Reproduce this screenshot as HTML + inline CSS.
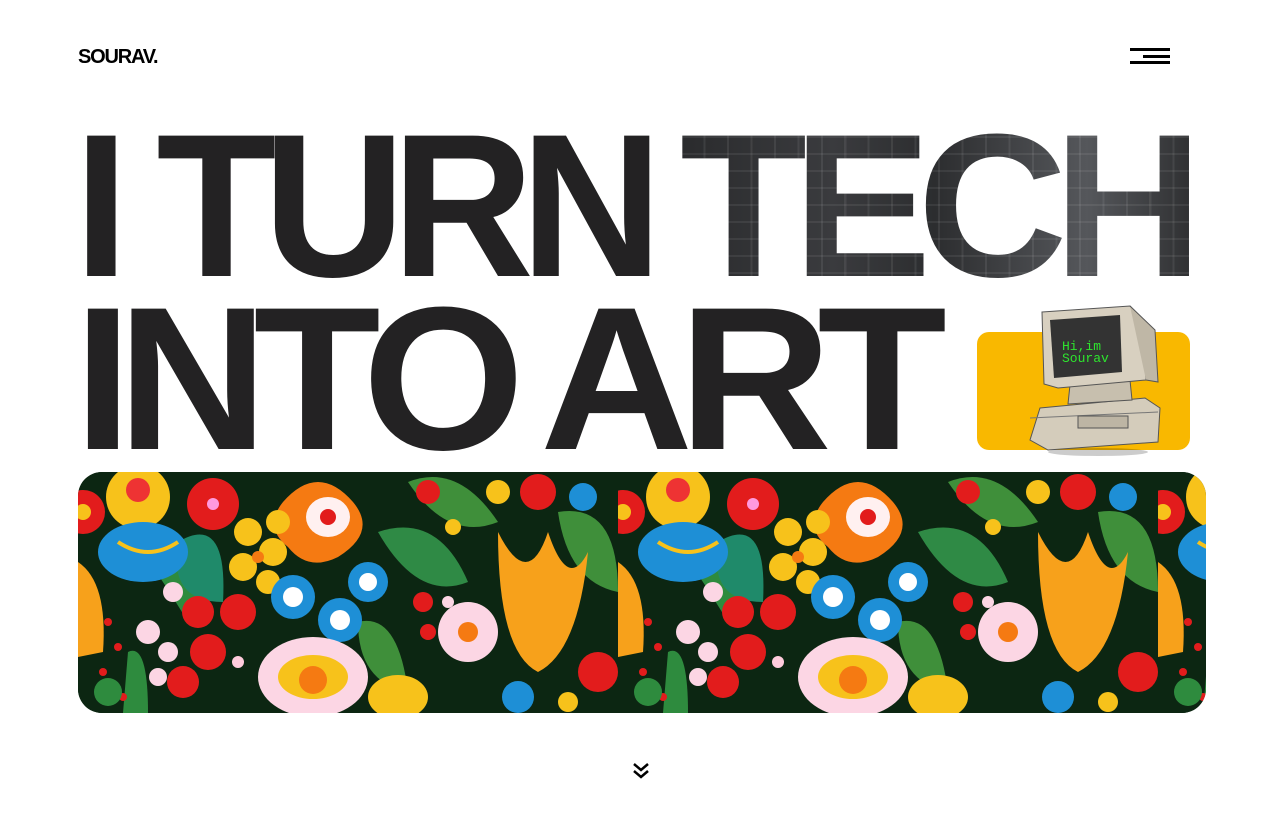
<!DOCTYPE html>
<html><head><meta charset="utf-8"><style>
html,body{margin:0;padding:0;background:#fff;width:1280px;height:832px;overflow:hidden;position:relative;font-family:"Liberation Sans",Arial,sans-serif}
.logo{position:absolute;left:78px;top:45px;font-weight:700;font-size:20px;letter-spacing:-1.2px;color:#000;line-height:24px}
.hb{position:absolute;height:3px;background:#000}
.w{position:absolute;font-weight:700;font-size:204px;letter-spacing:-14px;line-height:1;color:#232223;white-space:pre;transform-origin:left top}
.tech{background:
 repeating-linear-gradient(90deg,rgba(255,255,255,.08) 0 2px,transparent 2px 23px),
 repeating-linear-gradient(0deg,rgba(255,255,255,.07) 0 2px,transparent 2px 17px),
 linear-gradient(90deg,#2a2b2d,#3a3b3e 30%,#2c2d2f 50%,#55575b 80%,#303133);
 -webkit-background-clip:text;background-clip:text;color:transparent}
.card{position:absolute;left:977px;top:332px;width:213px;height:118px;border-radius:12px;background:#f9b800}
.banner{position:absolute;left:78px;top:472px;width:1128px;height:241px;border-radius:24px;overflow:hidden;background:#0c2612}
</style></head><body>
<div class="logo">SOURAV.</div>
<div class="hb" style="left:1130px;top:48px;width:40px"></div>
<div class="hb" style="left:1143px;top:55px;width:27px"></div>
<div class="hb" style="left:1130px;top:61px;width:40px"></div>

<div class="w" style="left:74px;top:104px;transform:scaleX(0.965)">I TURN</div>
<div class="w tech" style="left:680px;top:104px;transform:scaleX(1.02)">TECH</div>
<div class="w" style="left:74px;top:277px;transform:scaleX(1.02)">INTO</div>
<div class="w" style="left:540px;top:277px;transform:scaleX(1.04)">ART</div>

<div class="card"></div>
<svg style="position:absolute;left:1020px;top:300px" width="150" height="160" viewBox="0 0 150 160">
 <ellipse cx="78" cy="152" rx="50" ry="4" fill="#0003"/>
 <path d="M20 108 L125 98 L140 108 L138 142 L28 150 L10 140 Z" fill="#d4ccbb" stroke="#555" stroke-width="1"/>
 <path d="M10 118 L138 112" stroke="#777"/>
 <rect x="58" y="116" width="50" height="12" fill="#bdb5a4" stroke="#555"/>
 <path d="M50 85 L110 80 L112 100 L48 104 Z" fill="#c7bfae" stroke="#555"/>
 <path d="M22 12 L110 6 L122 18 L126 80 L38 88 L24 84 Z" fill="#d8d0c0" stroke="#555"/>
 <path d="M110 6 L135 30 L138 82 L126 80" fill="#bfb7a6" stroke="#555"/>
 <path d="M30 20 L100 15 L102 72 L34 78 Z" fill="#333"/>
 <text x="42" y="50" font-family="Liberation Mono,monospace" font-size="13" fill="#2ee52e">Hi,im</text>
 <text x="42" y="62" font-family="Liberation Mono,monospace" font-size="13" fill="#2ee52e">Sourav</text>
</svg>

<div class="banner">
<svg width="1128" height="241" viewBox="0 0 1128 241">
<defs><pattern id="p" width="540" height="241" patternUnits="userSpaceOnUse">
 <rect width="540" height="241" fill="#0c2612"/>
 <path d="M60 40 Q90 80 130 140 L110 150 Q80 100 50 60Z" fill="#2e8b3e"/>
 <path d="M100 70 Q150 40 145 130 Q90 130 100 70Z" fill="#1f8a6a"/>
 <path d="M300 60 Q360 40 390 110 Q340 130 300 60Z" fill="#2f8a45"/>
 <path d="M330 10 Q380 -10 420 50 Q370 70 330 10Z" fill="#3f8f3a"/>
 <path d="M480 40 Q540 30 540 120 Q490 110 480 40Z" fill="#3f8f3a"/>
 <path d="M280 150 Q320 140 330 220 Q280 210 280 150Z" fill="#3f8f3a"/>
 <path d="M50 180 Q70 170 70 241 L45 241Z" fill="#2e8b3e"/>
 <circle cx="60" cy="25" r="32" fill="#f7c21b"/><circle cx="60" cy="18" r="12" fill="#e33"/>
 <circle cx="135" cy="32" r="26" fill="#e21c1c"/><circle cx="135" cy="32" r="6" fill="#f9d"/>
 <ellipse cx="65" cy="80" rx="45" ry="30" fill="#1e8fd6"/><path d="M40 70 Q70 90 100 70" stroke="#f7c21b" stroke-width="4" fill="none"/>
 <path d="M205 30 Q240 -10 275 30 Q300 60 260 85 Q230 100 210 75 Q185 55 205 30Z" fill="#f57a12"/><ellipse cx="250" cy="45" rx="22" ry="20" fill="#fff0f0"/><circle cx="250" cy="45" r="8" fill="#e21c1c"/>
 <circle cx="170" cy="60" r="14" fill="#f7c21b"/><circle cx="195" cy="80" r="14" fill="#f7c21b"/><circle cx="165" cy="95" r="14" fill="#f7c21b"/><circle cx="190" cy="110" r="12" fill="#f7c21b"/><circle cx="180" cy="85" r="6" fill="#f57a12"/><circle cx="200" cy="50" r="12" fill="#f7c21b"/>
 <circle cx="215" cy="125" r="22" fill="#1e8fd6"/><circle cx="215" cy="125" r="10" fill="#fff"/>
 <circle cx="262" cy="148" r="22" fill="#1e8fd6"/><circle cx="262" cy="148" r="10" fill="#fff"/>
 <circle cx="290" cy="110" r="20" fill="#1e8fd6"/><circle cx="290" cy="110" r="9" fill="#fff"/>
 <circle cx="120" cy="140" r="16" fill="#e21c1c"/><circle cx="160" cy="140" r="18" fill="#e21c1c"/><circle cx="130" cy="180" r="18" fill="#e21c1c"/><circle cx="105" cy="210" r="16" fill="#e21c1c"/><circle cx="160" cy="190" r="6" fill="#fcd"/>
 <circle cx="70" cy="160" r="12" fill="#fcd6e4"/><circle cx="95" cy="120" r="10" fill="#fcd6e4"/><circle cx="90" cy="180" r="10" fill="#fcd6e4"/><circle cx="80" cy="205" r="9" fill="#fcd6e4"/>
 <circle cx="30" cy="150" r="4" fill="#e21c1c"/><circle cx="40" cy="175" r="4" fill="#e21c1c"/><circle cx="25" cy="200" r="4" fill="#e21c1c"/><circle cx="45" cy="225" r="4" fill="#e21c1c"/>
 <path d="M0 90 Q30 110 25 180 L0 185Z" fill="#f7a11b"/>
 <ellipse cx="235" cy="205" rx="55" ry="40" fill="#fcd6e4"/><ellipse cx="235" cy="205" rx="35" ry="22" fill="#f7c21b"/><circle cx="235" cy="208" r="14" fill="#f57a12"/>
 <ellipse cx="320" cy="225" rx="30" ry="22" fill="#f7c21b"/>
 <circle cx="350" cy="20" r="12" fill="#e21c1c"/><circle cx="375" cy="55" r="8" fill="#f7c21b"/><circle cx="345" cy="130" r="10" fill="#e21c1c"/><circle cx="370" cy="130" r="6" fill="#fcd6e4"/>
 <path d="M420 60 Q450 120 470 60 Q490 120 510 80 Q500 180 460 200 Q420 180 420 60Z" fill="#f7a11b"/>
 <circle cx="390" cy="160" r="30" fill="#fcd6e4"/><circle cx="390" cy="160" r="10" fill="#f57a12"/>
 <circle cx="520" cy="200" r="20" fill="#e21c1c"/><circle cx="350" cy="160" r="8" fill="#e21c1c"/>
 <circle cx="30" cy="220" r="14" fill="#2e8b3e"/><circle cx="460" cy="20" r="18" fill="#e21c1c"/>
 <circle cx="420" cy="20" r="12" fill="#f7c21b"/><circle cx="505" cy="25" r="14" fill="#1e8fd6"/><circle cx="440" cy="225" r="16" fill="#1e8fd6"/><circle cx="490" cy="230" r="10" fill="#f7c21b"/>
 <circle cx="5" cy="40" r="22" fill="#e21c1c"/><circle cx="5" cy="40" r="8" fill="#f7c21b"/>
</pattern></defs>
<rect width="1128" height="241" fill="url(#p)"/>
</svg>
</div>

<svg style="position:absolute;left:632px;top:762px" width="18" height="18" viewBox="0 0 18 18"><path d="M2 2 L9 8 L16 2 M2 9 L9 15 L16 9" stroke="#000" stroke-width="2.5" fill="none"/></svg>
</body></html>
